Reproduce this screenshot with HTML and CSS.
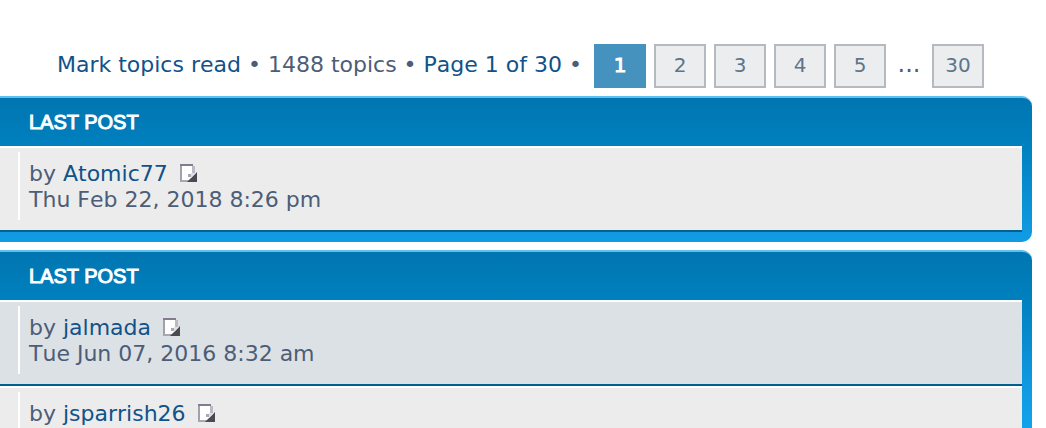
FILE: index.html
```html
<!DOCTYPE html>
<html lang="en">
<head>
<meta charset="utf-8">
<title>Forum topics</title>
<link rel="stylesheet" href="styles.css">
</head>
<body>
<svg class="sprite" aria-hidden="true">
  <symbol id="latest" viewBox="0 0 18 18">
    <path d="M1 1h12v7l4 3v6H1z" fill="#fff"/>
    <path d="M2 18V0" stroke="#a39fac" stroke-width="2"/>
    <path d="M1 1h13" stroke="#847b90" stroke-width="2"/>
    <path d="M13 2h3v8h-3z" fill="#bcb9c4"/>
    <path d="M2 17h9" stroke="#a9a7b0" stroke-width="2"/>
    <path d="M18 8v10H8z" fill="#4d4953"/>
    <path d="M12 9h5l-5 5z" fill="#dfe0e3"/>
    <path d="M9 10h3v3H9z" fill="#a5abb0"/>
  </symbol>
</svg>
<nav class="actions" aria-label="Topic pages">
  <span class="summary"><a href="#read">Mark topics read</a> • 1488 topics • <a href="#jump">Page 1 of 30</a> •</span>
  <span class="pages">
    <strong class="page current">1</strong>
    <a class="page" href="#p2">2</a>
    <a class="page" href="#p3">3</a>
    <a class="page" href="#p4">4</a>
    <a class="page" href="#p5">5</a>
    <span class="dots">...</span>
    <a class="page" href="#p30">30</a>
  </span>
</nav>
<main>
  <section class="forum">
    <h2>LAST POST</h2>
    <ul class="topics">
      <li class="row"><div class="lastpost">by <a href="#u1">Atomic77</a> <a href="#l1" aria-label="View the latest post"><svg class="icon"><use href="#latest"/></svg></a><br>Thu Feb 22, 2018 8:26 pm</div></li>
    </ul>
  </section>
  <section class="forum long">
    <h2>LAST POST</h2>
    <ul class="topics">
      <li class="row alt"><div class="lastpost">by <a href="#u2">jalmada</a> <a href="#l2" aria-label="View the latest post"><svg class="icon"><use href="#latest"/></svg></a><br>Tue Jun 07, 2016 8:32 am</div></li>
      <li class="row"><div class="lastpost">by <a href="#u3">jsparrish26</a> <a href="#l3" aria-label="View the latest post"><svg class="icon"><use href="#latest"/></svg></a></div></li>
    </ul>
  </section>
</main>
</body>
</html>
```
FILE: styles.css
```css
* { box-sizing: border-box; }
body {
  margin: 0;
  padding: 44px 14px 0 0;
  height: 100vh;
  overflow: hidden;
  background: #fff;
  color: #4c5d77;
  font: 22px/26px Verdana, "DejaVu Sans", sans-serif;
  font-kerning: none;
}
a { color: #105289; text-decoration: none; }
.sprite { position: absolute; width: 0; height: 0; }
.actions {
  display: flex;
  justify-content: flex-end;
  align-items: center;
  gap: 12px;
  padding-right: 48px;
  white-space: nowrap;
}
.summary { padding-bottom: 2px; }
.pages { display: flex; gap: 8px; font-size: 20px; }
.page {
  min-width: 52px;
  height: 44px;
  padding: 0 11px;
  border: 2px solid #b4bac0;
  background: #ecedee;
  color: #5c758c;
  font-weight: normal;
  line-height: 38px;
  text-align: center;
}
.page.current {
  border-color: #4692bf;
  background: #4692bf;
  color: #fff;
  -webkit-text-stroke: 1px #fff;
}
.dots { width: 30px; line-height: 40px; text-align: center; font-size: 24px; }
.forum {
  margin-top: 8px;
  padding: 0 10px 10px 0;
  border-top: 2px solid #5cc0f0;
  border-radius: 0 10px 10px 0;
  background: linear-gradient(#0076b1 0, #0080bf 48px, #1099e1 134px, #12a3eb 180px);
}
.long { min-height: 178px; }
h2 {
  margin: 0;
  padding: 1px 0 0 29px;
  color: #fff;
  font: 20px/47px Arial, "Liberation Sans", sans-serif;
  -webkit-text-stroke: 1px #fff;
}
.topics { margin: 0; padding: 0; list-style: none; }
.row {
  min-height: 86px;
  padding: 4px 0 10px 18px;
  border-top: 2px solid #fff;
  border-bottom: 2px solid #00608f;
  background: #ececec;
}
.row.alt { background: #dce1e5; }
.lastpost {
  min-height: 68px;
  padding: 9px 0 7px 9px;
  border-left: 2px solid #fff;
}
.icon { width: 18px; height: 18px; margin-left: 4px; vertical-align: -1px; }
```
